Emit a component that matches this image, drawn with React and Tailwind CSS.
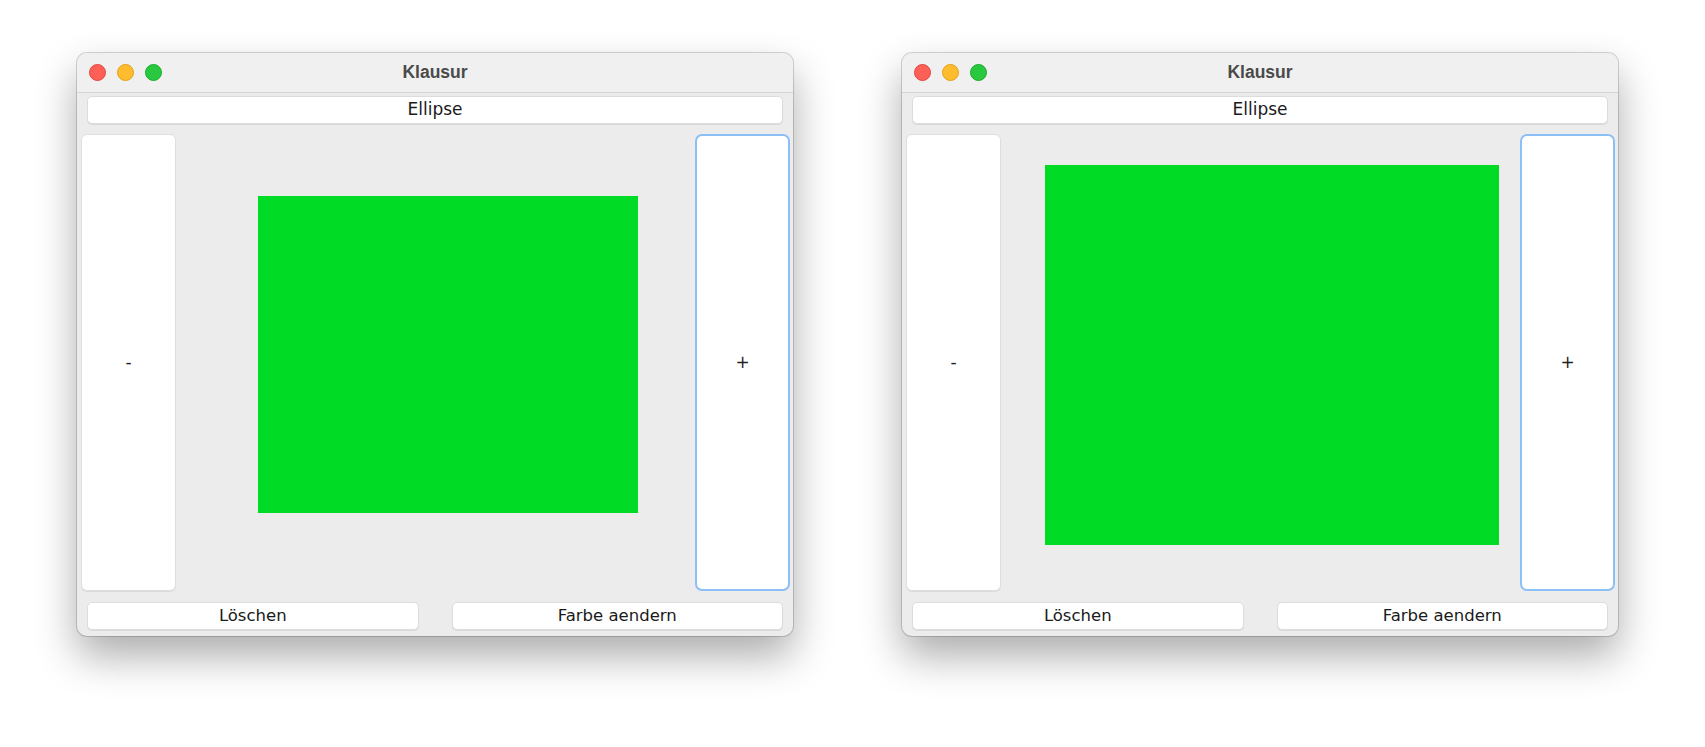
import React from "react";

const btnText = { fontFamily: '"DejaVu Sans", "Liberation Sans", sans-serif' };

function Win({ rect }) {
  return (
    <div className="w-[716px] h-[583px] rounded-[10px] overflow-hidden flex flex-col bg-[#ececec] shadow-[0_0_0_1px_rgba(0,0,0,0.16),0_20px_42px_rgba(0,0,0,0.33)] shrink-0">
      <div className="relative h-[40px] shrink-0 bg-[#f0f0f0] border-b border-[#d4d4d4] flex items-center pl-[12px] gap-[11px]">
        <div className="w-[17px] h-[17px] rounded-full bg-[#fe5f57] border border-[#e2463f]" />
        <div className="w-[17px] h-[17px] rounded-full bg-[#febc2e] border border-[#e1a116]" />
        <div className="w-[17px] h-[17px] rounded-full bg-[#28c840] border border-[#1aab29]" />
        <div
          className="absolute inset-0 flex items-center justify-center text-[17.5px] font-bold text-[#4a4a4a] pb-[1px]"
          style={{ fontFamily: '"Liberation Sans", Arial, sans-serif' }}
        >
          Klausur
        </div>
      </div>
      <div className="mt-[3px] mx-[10px] h-[28px] shrink-0 bg-white rounded-[5px] border border-[#dcdcdc] shadow-[0_1px_0_rgba(0,0,0,0.08)] flex items-center justify-center text-[17px] text-[#1a1a1a]" style={btnText}>
        Ellipse
      </div>
      <div className="mt-[10px] h-[457px] shrink-0 flex pl-[4px] pr-[3px]">
        <div className="w-[95px] h-full bg-white rounded-[6px] border border-[#dedede] shadow-[0_1px_0_rgba(0,0,0,0.07)] flex items-center justify-center text-[17px] text-[#222]" style={btnText}>
          -
        </div>
        <div className="flex-1 relative">
          <div
            className="absolute bg-[#00dc26]"
            style={{ left: rect.x, top: rect.y, width: rect.w, height: rect.h }}
          />
        </div>
        <div className="w-[95px] h-full bg-white rounded-[7px] border-[2.5px] border-[#8cbff6] flex items-center justify-center text-[17px] text-[#222]" style={btnText}>
          +
        </div>
      </div>
      <div className="mt-[11px] flex gap-[33px] px-[10px]">
        <div className="flex-1 h-[28px] bg-white rounded-[5px] border border-[#dcdcdc] shadow-[0_1px_0_rgba(0,0,0,0.08)] flex items-center justify-center text-[16.5px] text-[#1a1a1a]" style={btnText}>
          Löschen
        </div>
        <div className="flex-1 h-[28px] bg-white rounded-[5px] border border-[#dcdcdc] shadow-[0_1px_0_rgba(0,0,0,0.08)] flex items-center justify-center text-[16.5px] text-[#1a1a1a]" style={btnText}>
          Farbe aendern
        </div>
      </div>
    </div>
  );
}

export default function App() {
  return (
    <div className="w-[1705px] h-[747px] bg-white flex items-start pt-[53px] pl-[77px] gap-[109px] overflow-hidden">
      <Win rect={{ x: 82, y: 62, w: 380, h: 317 }} />
      <Win rect={{ x: 44, y: 31, w: 454, h: 380 }} />
    </div>
  );
}
